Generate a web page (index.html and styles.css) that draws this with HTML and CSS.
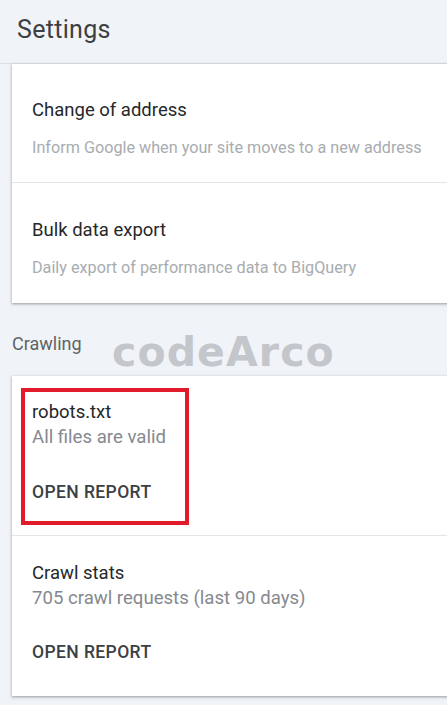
FILE: index.html
```html
<!DOCTYPE html>
<html>
<head>
<meta charset="utf-8">
<link rel="stylesheet" href="styles.css">
</head>
<body>
<div class="page">
  <header class="header"><h1 class="title">Settings</h1></header>
  <section class="card card-top">
    <div class="item item-a">
      <div class="item-title">Change of address</div>
      <div class="item-sub">Inform Google when your site moves to a new address</div>
    </div>
    <div class="item item-b">
      <div class="item-title">Bulk data export</div>
      <div class="item-sub">Daily export of performance data to BigQuery</div>
    </div>
  </section>
  <div class="section-label">Crawling</div>
  <section class="card card-crawl">
    <div class="report report-a">
      <div class="report-title">robots.txt</div>
      <div class="report-sub">All files are valid</div>
      <div class="report-link">OPEN REPORT</div>
      <div class="highlight"></div>
    </div>
    <div class="report report-b">
      <div class="report-title">Crawl stats</div>
      <div class="report-sub">705 crawl requests (last 90 days)</div>
      <div class="report-link">OPEN REPORT</div>
    </div>
  </section>
  <div class="watermark">codeArco</div>
</div>
</body>
</html>
```

FILE: styles.css
```css
* { box-sizing: border-box; }
html, body { margin: 0; padding: 0; }
body {
  background: #f0f3f7;
  font-family: Roboto, "Noto Sans", Arial, sans-serif;
  overflow: hidden;
  width: 447px;
  height: 705px;
}
.page { position: relative; }
.header {
  height: 64px;
  border-bottom: 1px solid #dde1e6;
  padding-left: 17px;
  display: flex;
  align-items: center;
}
.title {
  margin: 0 0 4px 0;
  font-weight: 400;
  font-size: 25px;
  color: #3c4043;
  letter-spacing: 0.3px;
}
.card {
  background: #fff;
  margin-left: 12px;
  margin-right: -10px;
  box-shadow: 0 1px 2px rgba(60,64,67,0.35), 0 1px 3px 1px rgba(60,64,67,0.12);
}
.item { padding-left: 20px; }
.item-a { padding-top: 34px; padding-bottom: 24px; border-bottom: 1px solid #e3e5e8; }
.item-b { padding-top: 35px; padding-bottom: 25px; }
.item-title { font-size: 18.5px; line-height: 24px; color: #25272a; }
.item-sub { margin-top: 16px; font-size: 16.2px; line-height: 20px; color: #a8acb0; }
.section-label {
  margin-top: 29px;
  height: 44px;
  padding-left: 12px;
  font-size: 18px;
  line-height: 24px;
  color: #5f6368;
}
.report { position: relative; padding-left: 20px; }
.report-a { padding-top: 24px; padding-bottom: 33px; border-bottom: 1px solid #e3e5e8; }
.report-b { padding-top: 25px; padding-bottom: 34px; }
.report-title { font-size: 18.5px; line-height: 24px; color: #25272a; }
.report-sub { margin-top: 2px; font-size: 18.6px; line-height: 22px; color: #85898e; }
.report-link {
  margin-top: 34px;
  font-size: 17.5px;
  line-height: 20px;
  font-weight: 500;
  color: #3c4043;
  letter-spacing: 0.4px;
}
.report-b .report-link { margin-top: 33px; }
.highlight {
  position: absolute;
  left: 9px;
  top: 12px;
  width: 168px;
  height: 137px;
  border: 4px solid #e21b2a;
}
.watermark {
  position: absolute;
  left: 112px;
  top: 327px;
  font-family: "DejaVu Sans", sans-serif;
  font-weight: 700;
  font-size: 41px;
  line-height: 50px;
  letter-spacing: 1.1px;
  color: #c3c6ca;
}
```
